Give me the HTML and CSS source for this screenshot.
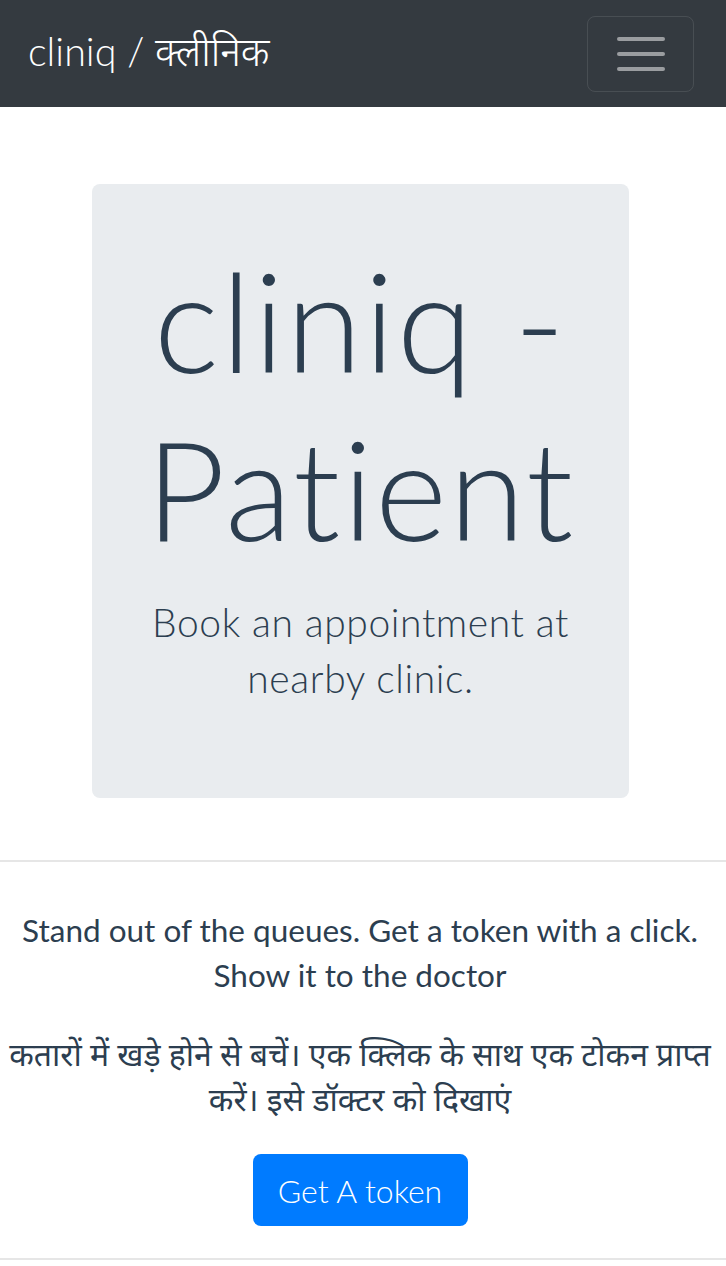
FILE: index.html
```html
<!DOCTYPE html>
<html lang="en">
<head>
<meta charset="utf-8">
<title>cliniq - Patient</title>
<link rel="stylesheet" href="styles.css">
</head>
<body>
<nav class="navbar">
  <a class="brand" href="#">cliniq / क्लीनिक</a>
  <button class="toggler" type="button" aria-label="Toggle navigation">
    <svg width="48" height="36" viewBox="0 0 48 36" aria-hidden="true">
      <g stroke="rgba(255,255,255,0.5)" stroke-width="4" stroke-linecap="round">
        <line x1="2" y1="3" x2="46" y2="3"/>
        <line x1="2" y1="18" x2="46" y2="18"/>
        <line x1="2" y1="33" x2="46" y2="33"/>
      </g>
    </svg>
  </button>
</nav>
<main class="main">
  <section class="jumbotron">
    <h1 class="display">cliniq - Patient</h1>
    <p class="lead">Book an appointment at nearby clinic.</p>
  </section>
  <hr class="rule">
  <section class="info">
    <p class="text">Stand out of the queues. Get a token with a click. Show it to the doctor</p>
    <p class="text hindi">कतारों में खड़े होने से बचें। एक क्लिक के साथ एक टोकन प्राप्त करें। इसे डॉक्टर को दिखाएं</p>
    <a class="btn" href="#">Get A token</a>
  </section>
  <hr class="rule">
</main>
</body>
</html>
```
FILE: styles.css
```css
html, body {
  margin: 0;
  padding: 0;
  background: #fff;
}
body {
  font-family: Lato, "Noto Sans", "Noto Sans Devanagari", "Lohit Devanagari", FreeSans, sans-serif;
  color: #2c3e50;
}
.navbar {
  height: 107px;
  background: #343a40;
  display: flex;
  align-items: center;
  justify-content: space-between;
  padding: 0 32px 0 28px;
  box-sizing: border-box;
}
.brand {
  color: #fff;
  text-decoration: none;
  font-size: 39.5px;
  font-weight: 300;
  line-height: 1;
  padding-bottom: 6px;
}
.toggler {
  width: 107px;
  height: 76px;
  background: transparent;
  border: 1px solid rgba(255,255,255,0.1);
  border-radius: 8px;
  display: flex;
  align-items: center;
  justify-content: center;
  padding: 0;
}
.main {
  display: flex;
  flex-direction: column;
  align-items: stretch;
}
.jumbotron {
  margin: 77px 97px 0 92px;
  height: 614px;
  box-sizing: border-box;
  background: #e9ecef;
  border-radius: 8px;
  padding: 52px 30px 0;
  text-align: center;
}
.display {
  margin: 0;
  font-size: 138px;
  font-weight: 300;
  line-height: 168px;
  letter-spacing: 2px;
}
.lead {
  margin: 22px 0 0;
  font-size: 39px;
  font-weight: 300;
  line-height: 56px;
  letter-spacing: 0.6px;
}
.rule {
  margin: 62px 0 0;
  border: 0;
  border-top: 2px solid #e6e6e6;
}
.info {
  padding: 46px 15px 0 9px;
  text-align: center;
  display: flex;
  flex-direction: column;
  align-items: center;
}
.text {
  margin: 0 0 33px;
  font-size: 31.5px;
  line-height: 45px;
}
.hindi {
  font-size: 32px;
  margin-bottom: 33px;
}
.btn {
  display: flex;
  align-items: center;
  justify-content: center;
  width: 215px;
  height: 72px;
  box-sizing: border-box;
  background: #007bff;
  color: #fff;
  border-radius: 8px;
  text-decoration: none;
  font-size: 32px;
  font-weight: 300;
}
.info + .rule {
  margin-top: 32px;
}
```
